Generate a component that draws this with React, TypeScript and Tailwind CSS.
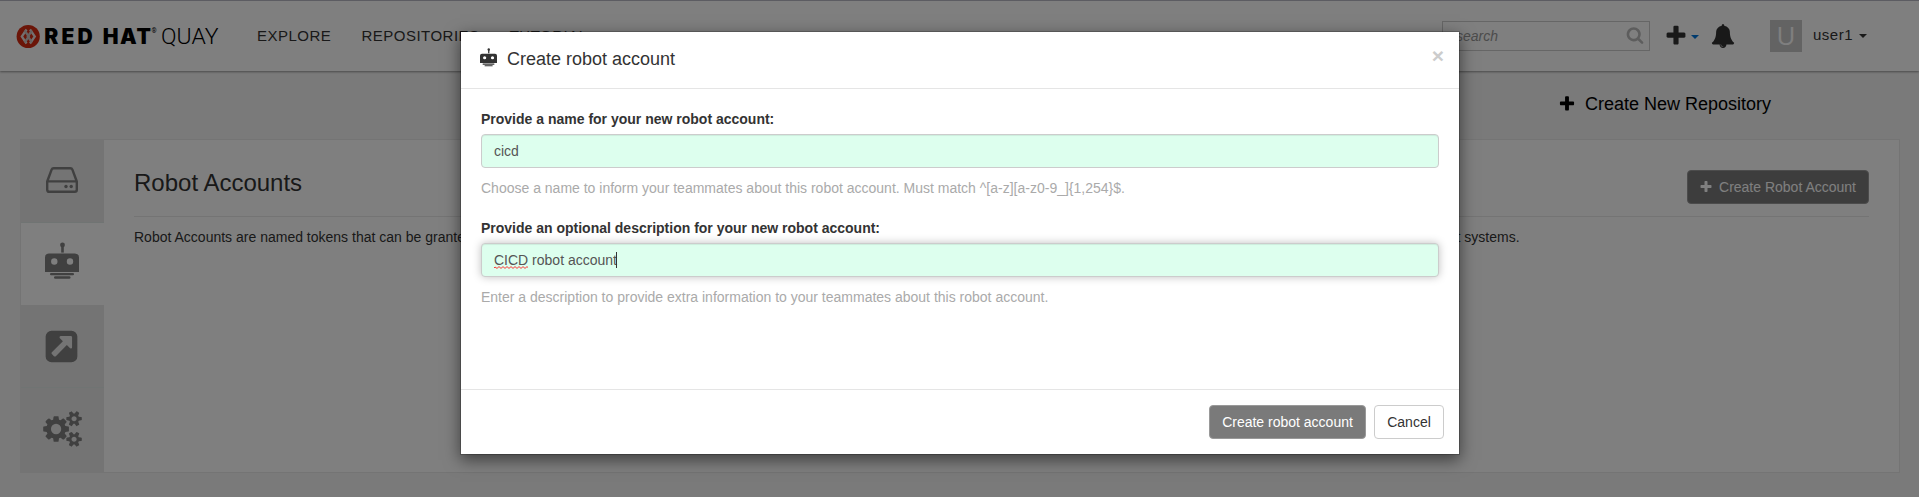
import React from "react";

const PLUS =
  "M1600 736v192q0 40-28 68t-68 28h-416v416q0 40-28 68t-68 28h-192q-40 0-68-28t-28-68v-416h-416q-40 0-68-28t-28-68v-192q0-40 28-68t68-28h416v-416q0-40 28-68t68-28h192q40 0 68 28t28 68v416h416q40 0 68 28t28 68z";
const SEARCH =
  "M1216 832q0-185-131.5-316.5t-316.5-131.5-316.5 131.5-131.5 316.5 131.5 316.5 316.5 131.5 316.5-131.5 131.5-316.5zm512 832q0 52-38 90t-90 38q-54 0-90-38l-343-342q-179 124-399 124-143 0-273.5-55.5t-225-150-150-225-55.5-273.5 55.5-273.5 150-225 225-150 273.5-55.5 273.5 55.5 225 150 150 225 55.5 273.5q0 220-124 399l343 343q37 37 37 90z";
const BELL =
  "M912 1696q0-16-16-16-59 0-101.5-42.5t-42.5-101.5q0-16-16-16t-16 16q0 73 51.5 124.5t124.5 51.5q16 0 16-16zm816-288q0 52-38 90t-90 38h-448q0 106-75 181t-181 75-181-75-75-181h-448q-52 0-90-38t-38-90q50-42 91-88t85-119.5 74.5-158.5 50-206 19.5-260q0-152 117-282.5t307-158.5q-8-19-8-39 0-40 28-68t68-28 68 28 28 68q0 20-8 39 190 28 307 158.5t117 282.5q0 139 19.5 260t50 206 74.5 158.5 85 119.5 91 88z";
const LINK =
  "M1408 928v-480q0-26-19-45t-45-19h-480q-42 0-59 39-17 41 14 70l144 144-534 534q-19 19-19 45t19 45l102 102q19 19 45 19t45-19l534-534 144 144q18 19 45 19 12 0 25-5 39-17 39-59zm256-512v960q0 119-84.5 203.5t-203.5 84.5h-960q-119 0-203.5-84.5t-84.5-203.5v-960q0-119 84.5-203.5t203.5-84.5h960q119 0 203.5 84.5t84.5 203.5z";
const GEARS =
  "M896 896q0-106-75-181t-181-75-181 75-75 181 75 181 181 75 181-75 75-181zm768 512q0-52-38-90t-90-38-90 38-38 90q0 53 37.5 90.5t90.5 37.5 90.5-37.5 37.5-90.5zm0-1024q0-52-38-90t-90-38-90 38-38 90q0 53 37.5 90.5t90.5 37.5 90.5-37.5 37.5-90.5zm-384 421v185q0 10-7 19.5t-16 10.5l-155 24q-11 35-32 76 34 48 90 115 7 11 7 20 0 12-7 19-23 30-82.5 89.5t-78.5 59.5q-11 0-21-7l-115-90q-37 19-77 31-11 108-23 155-7 24-30 24h-186q-11 0-20-7.5t-10-17.5l-23-153q-34-10-75-31l-118 89q-7 7-20 7-11 0-21-8-144-133-144-160 0-9 7-19 10-14 41-53t47-61q-23-44-35-82l-152-24q-10-1-17-9.5t-7-19.5v-185q0-10 7-19.5t16-10.5l155-24q11-35 32-76-34-48-90-115-7-11-7-20 0-12 7-20 22-30 82-89t79-59q11 0 21 7l115 90q34-18 77-32 11-108 23-154 7-24 30-24h186q11 0 20 7.5t10 17.5l23 153q34 10 75 31l118-89q8-7 20-7 11 0 21 8 144 133 144 160 0 8-7 19-12 16-42 54t-45 60q23 48 34 82l152 23q10 2 17 10.5t7 19.5zm640 533v140q0 16-149 31-12 27-30 52 51 113 51 138 0 4-4 7-122 71-124 71-8 0-46-47t-52-68q-20 2-30 2t-30-2q-14 21-52 68t-46 47q-2 0-124-71-4-3-4-7 0-25 51-138-18-25-30-52-149-15-149-31v-140q0-16 149-31 13-29 30-52-51-113-51-138 0-4 4-7 4-2 35-20t59-34 30-16q8 0 46 46.5t52 67.5q20-2 30-2t30 2q51-71 92-112l6-2q4 0 124 70 4 3 4 7 0 25-51 138 17 23 30 52 149 15 149 31zm0-1024v140q0 16-149 31-12 27-30 52 51 113 51 138 0 4-4 7-122 71-124 71-8 0-46-47t-52-68q-20 2-30 2t-30-2q-14 21-52 68t-46 47q-2 0-124-71-4-3-4-7 0-25 51-138-18-25-30-52-149-15-149-31v-140q0-16 149-31 13-29 30-52-51-113-51-138 0-4 4-7 4-2 35-20t59-34 30-16q8 0 46 46.5t52 67.5q20-2 30-2t30 2q51-71 92-112l6-2q4 0 124 70 4 3 4 7 0 25-51 138 17 23 30 52 149 15 149 31z";

function Glyph({ d, className, viewBox = "0 0 1792 1792" }: { d: string; className: string; viewBox?: string }) {
  return (
    <svg viewBox={viewBox} className={className} fill="currentColor">
      <path d={d} />
    </svg>
  );
}

function Robot({ className }: { className: string }) {
  return (
    <svg viewBox="0 0 36 38" className={className} fill="currentColor">
      <circle cx="18.5" cy="3" r="2.4" />
      <rect x="17.2" y="3" width="2.6" height="7.6" />
      <path
        fillRule="evenodd"
        d="M5 11.5h26a4 4 0 0 1 4 4V30H1V15.5a4 4 0 0 1 4-4zM10.3 16.3a3.2 3.2 0 1 0 0 6.4a3.2 3.2 0 1 0 0-6.4zM26 16.3a3.2 3.2 0 1 0 0 6.4a3.2 3.2 0 1 0 0-6.4z"
      />
      <rect x="6" y="31" width="24" height="2.3" rx="1.1" />
      <rect x="10" y="34.3" width="16.5" height="2.4" rx="1.2" />
    </svg>
  );
}

function Drive() {
  return (
    <svg viewBox="0 0 32 26" className="mb-[2px] mr-[2px] h-[26px] w-8" fill="none" stroke="currentColor" strokeWidth="2.4" strokeLinejoin="round">
      <path d="M1.2 14.5L5.6 2.6Q6.1 1.2 7.6 1.2H24.4Q25.9 1.2 26.4 2.6L30.8 14.5V22.8Q30.8 24.8 28.8 24.8H3.2Q1.2 24.8 1.2 22.8ZM1.5 14.4H30.5" />
      <circle cx="20" cy="19.5" r="1.7" fill="currentColor" stroke="none" />
      <circle cx="25.2" cy="19.5" r="1.7" fill="currentColor" stroke="none" />
    </svg>
  );
}

function Caret({ className }: { className: string }) {
  return (
    <svg viewBox="0 0 8 4" className={className} fill="currentColor">
      <path d="M0 0H8L4 4Z" />
    </svg>
  );
}

function Logo() {
  return (
    <svg viewBox="0 0 206 30" className="h-[30px] w-[206px] overflow-visible">
      <circle cx="14.2" cy="14.5" r="11.6" fill="#d62a10" />
      <g fill="none" strokeWidth="2.3" stroke="#e8e0de">
        <path d="M12.6 7.5L7.8 14.5L12.6 21.5" />
        <path d="M16 7.5L20.8 14.5L16 21.5" />
        <path d="M18 8.5L13.8 14.5L18 20.5" stroke="#cfc4c2" />
        <path d="M10.6 8.5L14.8 14.5L10.6 20.5" stroke="#cfc4c2" />
      </g>
      <g fill="#000">
        <text x="30.2" y="22" fontFamily="Inter" fontWeight="900" fontSize="21" textLength="48.5" lengthAdjust="spacing">RED</text>
        <text x="88.8" y="22" fontFamily="Inter" fontWeight="900" fontSize="21" textLength="48" lengthAdjust="spacing">HAT</text>
        <text x="137.5" y="11" fontFamily="Roboto" fontSize="6.5">®</text>
        <text x="147" y="22" fontFamily="Roboto" fontSize="22" fontWeight="300" textLength="57.5" lengthAdjust="spacingAndGlyphs">QUAY</text>
      </g>
    </svg>
  );
}

const tab = "flex h-[83px] w-[83px] items-center justify-center border-b border-[#e1e8e6] bg-[#e8e8e8]";

export default function App() {
  return (
    <div className="relative h-[497px] w-[1919px] overflow-hidden bg-[#f4f4f4] font-['Liberation_Sans',Arial,sans-serif] text-sm text-[#333]">
      <header className="relative flex h-[71px] items-center border-t border-[#b8b8c4] bg-white shadow-[0_1px_2px_rgba(0,0,0,0.4)]">
        <div className="ml-[14px] mt-[2px] w-[206px]"><Logo /></div>
        <nav className="ml-[37px] flex gap-[30px] text-[15px] leading-5 tracking-[0.5px]">
          <span>EXPLORE</span>
          <span>REPOSITORIES</span>
          <span>TUTORIAL</span>
        </nav>
        <div className="ml-auto flex h-[30px] w-[208px] items-center justify-between border border-[#ccc] pl-[13px] pr-[5px]">
          <span className="italic text-[#999]">search</span>
          <Glyph d={SEARCH} className="mb-[2px] h-[18px] w-[18px] text-[#bbb]" />
        </div>
        <div className="ml-[14px] flex items-center">
          <Glyph d={PLUS} className="h-6 w-6" />
          <Caret className="ml-[3px] mt-px h-1 w-2 text-[#0076dd]" />
          <Glyph d={BELL} className="ml-3 h-6 w-6" />
        </div>
        <div className="ml-[35px] flex h-8 w-8 items-center justify-center bg-[#c7c7c7] pb-[2px] font-['Open_Sans',sans-serif] text-[26px] leading-8 text-white">U</div>
        <div className="ml-[11px] mr-[52px] flex items-center">
          <span className="-mt-[2px] text-[15px] tracking-[0.5px]">user1</span>
          <Caret className="ml-[6px] mt-px h-1 w-2" />
        </div>
      </header>

      <div className="flex h-[68px] items-center justify-end pb-[2px] pr-[148px] text-lg text-black">
        <Glyph d={PLUS} className="mr-[9px] h-[18px] w-[18px]" />
        <span className="leading-6">Create New Repository</span>
      </div>

      <main className="ml-5 flex h-[334px] w-[1880px] border border-[#e8e8e8] bg-white">
        <aside className="w-[83px] text-[#808080]">
          <div className={tab}><Drive /></div>
          <div className="flex h-[82px] w-[83px] items-center justify-center bg-white"><Robot className="mb-[7px] mr-[2px] h-[38px] w-9" /></div>
          <div className={tab}><Glyph d={LINK} className="mr-[2px] h-[37px] w-[37px]" /></div>
          <div className="flex h-[84px] w-[83px] items-center justify-center bg-[#e8e8e8]"><Glyph d={GEARS} viewBox="0 0 1920 1792" className="mb-[2px] mr-px h-[36px] w-[39px]" /></div>
        </aside>
        <section className="ml-[30px] w-[1735px]">
          <div className="flex h-[77px] items-center justify-between border-b border-[#e8e8e8] pt-[9px]">
            <h1 className="text-2xl">Robot Accounts</h1>
            <button className="mt-2 flex h-[34px] items-center rounded border border-[#999] bg-[#7a7a7a] pl-[11px] pr-3 text-white">
              <Glyph d={PLUS} className="mr-[6px] h-[14px] w-[14px]" />
              <span>Create Robot Account</span>
            </button>
          </div>
          <p className="pt-[10px] leading-5 tracking-[0.003px] whitespace-nowrap">
            Robot Accounts are named tokens that can be granted permissions on multiple repositories under this namespace.{"\u00a0"} They are typically used in environments where credentials have to be shared, such as deployment systems.
          </p>
        </section>
      </main>

      <div className="absolute inset-0 bg-black/50" />
      <div className="absolute inset-0 flex items-start justify-center pt-[31px]">
        <div role="dialog" className="ml-[1px] h-[424px] w-[1000px] border border-black/20 bg-white bg-clip-padding shadow-[0_5px_15px_rgba(0,0,0,0.5)]">
          <div className="flex h-[57px] items-center border-b border-[#e5e5e5] px-[18px] pb-[3px]">
            <Robot className="mb-[2px] mr-[9px] h-[19px] w-[19px]" />
            <h2 className="text-lg leading-6">Create robot account</h2>
            <span className="ml-auto mr-[-3px] mt-[-6px] text-[21px] font-bold leading-5 text-[#ccc]">×</span>
          </div>
          <div className="h-[300px] px-[20px] pt-[20px] leading-5">
            <label className="block font-bold">Provide a name for your new robot account:</label>
            <div className="mt-[5px] flex h-[34px] items-center rounded border border-[#ccc] bg-[#ddffee] px-3 text-[#555] shadow-[inset_0_1px_1px_rgba(0,0,0,0.075)]">cicd</div>
            <p className="mt-[10px] text-[#aaa]">Choose a name to inform your teammates about this robot account. Must match ^[a-z][a-z0-9_]{"{1,254}"}$.</p>
            <label className="mt-5 block font-bold">Provide an optional description for your new robot account:</label>
            <div className="mt-[5px] flex h-[34px] items-center rounded border border-[#ccc] bg-[#ddffee] px-3 text-[#555] shadow-[inset_0_1px_1px_rgba(0,0,0,0.075),0_0_8px_rgba(0,0,0,0.25)]">
              <span className="relative">
                CICD
                <svg className="absolute left-0 top-[16px] h-[3px] w-[34px]" viewBox="0 0 34 3" fill="none" stroke="#f22" strokeWidth="0.9">
                  <path d="M0 2L1 1L3 2.4L5 .6L7 2.4L9 .6L11 2.4L13 .6L15 2.4L17 .6L19 2.4L21 .6L23 2.4L25 .6L27 2.4L29 .6L31 2.4L33 .6L34 1.5" />
                </svg>
              </span>
              <span className="whitespace-pre"> robot account</span>
              <span className="-ml-px h-4 w-px bg-[#333]" />
            </div>
            <p className="mt-[10px] text-[#aaa]">Enter a description to provide extra information to your teammates about this robot account.</p>
          </div>
          <div className="flex h-[65px] items-center justify-end gap-2 border-t border-[#e5e5e5] pr-[15px]">
            <button className="h-[34px] w-[157px] rounded border border-[#999] bg-[#7a7a7a] text-white">Create robot account</button>
            <button className="h-[34px] w-[70px] rounded border border-[#ccc] bg-white">Cancel</button>
          </div>
        </div>
      </div>
    </div>
  );
}
